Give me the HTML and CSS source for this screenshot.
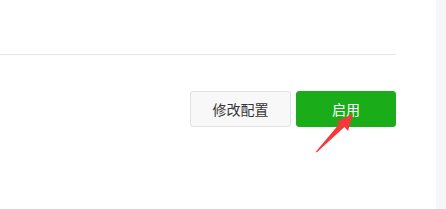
FILE: index.html
```html
<!DOCTYPE html>
<html lang="zh-CN">
<head>
  <meta charset="UTF-8">
  <meta name="viewport" content="width=device-width, initial-scale=1">
  <title>启用配置</title>
  <link rel="stylesheet" href="styles.css">
</head>
<body>
  <div class="page">
    <!-- Main panel -->
    <div class="panel">
      <div class="panel-head"></div>
      <div class="panel-actions">
        <button type="button" class="btn btn-default">修改配置</button>
        <button type="button" class="btn btn-primary">启用</button>
      </div>
      <!-- Annotation arrow pointing at the enable button -->
      <svg class="pointer-arrow" width="446" height="209" viewBox="0 0 446 209">
        <polygon points="353,114 348,131 344.5,127 316.6,152.6 315.8,151.8 340,123 334.5,122.5" fill="#f5393a"/>
      </svg>
    </div>
    <!-- Right side rail -->
    <div class="side-rail"></div>
  </div>
</body>
</html>
```

FILE: styles.css
```css
html, body {
  margin: 0;
  height: 100%;
  background: #fff;
  font-family: "Noto Sans CJK SC", "Noto Sans", sans-serif;
}

.page {
  display: flex;
  height: 100%;
}

.panel {
  position: relative;
  flex: 1 1 auto;
  background: #fff;
}

.panel-head {
  height: 54px;
  margin-right: 40px;
  border-bottom: 1px solid #e5e5e5;
}

.panel-actions {
  display: flex;
  justify-content: flex-end;
  gap: 5px;
  margin-right: 40px;
  padding-top: 36px;
}

.btn {
  box-sizing: border-box;
  height: 36px;
  width: 100px;
  padding: 0;
  border-radius: 3px;
  font-family: inherit;
  font-size: 14px;
  line-height: 34px;
  cursor: pointer;
}

.btn-default {
  width: 101px;
  background: #f8f8f8;
  border: 1px solid #e2e2e2;
  color: #353535;
}

.btn-primary {
  background: #1aad19;
  border: 1px solid #1aad19;
  color: #fff;
}

/* Annotation overlay */
.pointer-arrow {
  position: absolute;
  top: 0;
  left: 0;
  pointer-events: none;
}

.side-rail {
  flex: 0 0 10px;
  background: #f5f6f7;
}
```
